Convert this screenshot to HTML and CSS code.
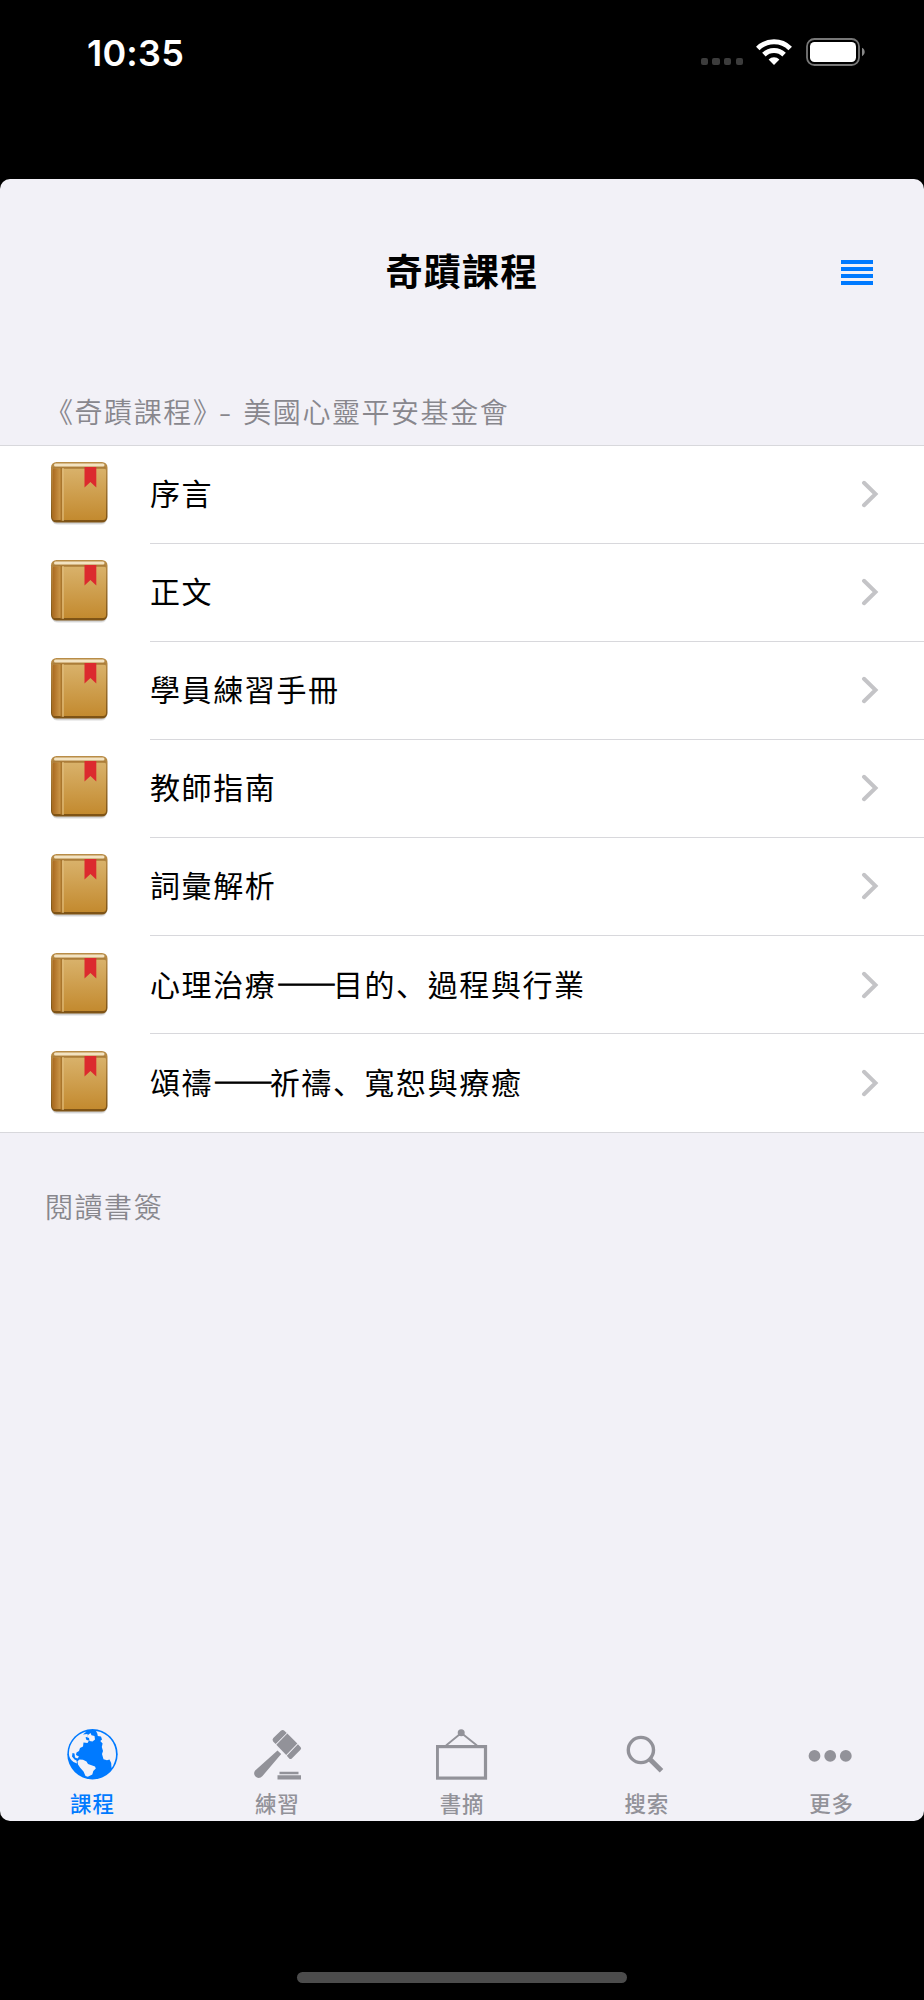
FILE: index.html
```
<!DOCTYPE html>
<html lang="zh-Hant">
<head>
  <meta charset="UTF-8" />
  <meta name="viewport" content="width=device-width, initial-scale=1.0"/>
  <title>奇蹟課程</title>
  <link rel="stylesheet" href="styles.css">
</head>
<body>
  <!-- Shared icons -->
  <svg class="defs" width="0" height="0">
    <defs>
      <linearGradient id="cover" x1="0" y1="0" x2="0" y2="1">
        <stop offset="0" stop-color="#d9b26b"/>
        <stop offset="1" stop-color="#c38a2f"/>
      </linearGradient>
      <linearGradient id="spine" x1="0" y1="0" x2="1" y2="0">
        <stop offset="0" stop-color="#a9691f"/>
        <stop offset="1" stop-color="#cf9c4e"/>
      </linearGradient>
      <linearGradient id="edge" x1="0" y1="0" x2="0" y2="1">
        <stop offset="0" stop-color="#b98d48"/>
        <stop offset="1" stop-color="#7d5214"/>
      </linearGradient>
      <symbol id="book" viewBox="0 0 60 66">
        <rect x="2" y="4" width="55" height="60" rx="6" fill="#000" opacity=".07"/>
        <rect x="1.5" y="3" width="55" height="60" rx="5" fill="#000" opacity=".1"/>
        <rect x="1" y="1" width="56.5" height="60.5" rx="5.5" fill="url(#edge)"/>
        <rect x="4" y="2.6" width="50.5" height="3" rx="1.5" fill="#f3e3c2"/>
        <rect x="2.5" y="7" width="53.5" height="52" rx="3" fill="url(#cover)"/>
        <rect x="3" y="6.3" width="52.5" height="1.4" fill="#a97a35"/>
        <rect x="2.5" y="7.5" width="9" height="51.5" rx="2" fill="url(#spine)"/>
        <rect x="10.6" y="7" width="1.2" height="53" fill="#a06c25"/>
        <rect x="12.4" y="7" width="1.2" height="53" fill="#e2be80"/>
        <path d="M34.5 6h11.8v20.500l-5.900-5.500-5.900 5.500z" fill="#dc2a2e"/>
      </symbol>
      <symbol id="chevron" viewBox="0 0 18 28">
        <path d="M3 2.8 14.5 14 3 25.2" fill="none" stroke="#c4c4c7" stroke-width="4" stroke-linecap="round"/>
      </symbol>
    </defs>
  </svg>

  <header class="status-bar">
    <span class="time">10:35</span>
    <div class="status-icons">
      <div class="signal"><i></i><i></i><i></i><i></i></div>
      <svg class="wifi" viewBox="0 0 36 28">
        <g fill="none" stroke="#fff" stroke-width="5">
          <path d="M1.8 10.4a23 23 0 0 1 32.4 0"/>
          <path d="M7.9 16.6a14.5 14.5 0 0 1 20.2 0"/>
        </g>
        <path d="M12.6 21.4a7.8 7.8 0 0 1 10.8 0L18 27z" fill="#fff"/>
      </svg>
      <svg class="battery" viewBox="0 0 60 28">
        <rect x="1" y="1" width="52" height="26" rx="7.5" fill="none" stroke="#777" stroke-width="1.8"/>
        <rect x="4" y="4" width="46" height="20" rx="4.5" fill="#fff"/>
        <path d="M56 9.8c3.6 1.8 3.6 6.6 0 8.4z" fill="#888"/>
      </svg>
    </div>
  </header>

  <main class="panel">
    <div class="nav-bar">
      <h1>奇蹟課程</h1>
      <div class="menu"><i></i><i></i><i></i><i></i></div>
    </div>

    <h2 class="section-title first">《奇蹟課程》<span class="dash">-</span>美國心靈平安基金會</h2>
    <ul class="list">
      <li><svg class="book"><use href="#book"/></svg><div class="row"><span>序言</span><svg class="chevron"><use href="#chevron"/></svg></div></li>
      <li><svg class="book"><use href="#book"/></svg><div class="row"><span>正文</span><svg class="chevron"><use href="#chevron"/></svg></div></li>
      <li><svg class="book"><use href="#book"/></svg><div class="row"><span>學員練習手冊</span><svg class="chevron"><use href="#chevron"/></svg></div></li>
      <li><svg class="book"><use href="#book"/></svg><div class="row"><span>教師指南</span><svg class="chevron"><use href="#chevron"/></svg></div></li>
      <li><svg class="book"><use href="#book"/></svg><div class="row"><span>詞彙解析</span><svg class="chevron"><use href="#chevron"/></svg></div></li>
      <li><svg class="book"><use href="#book"/></svg><div class="row"><span>心理治療<b>——</b>目的<em lang="zh-Hans">、</em>過程與行業</span><svg class="chevron"><use href="#chevron"/></svg></div></li>
      <li><svg class="book"><use href="#book"/></svg><div class="row"><span>頌禱<b>——</b>祈禱<em lang="zh-Hans">、</em>寬恕與療癒</span><svg class="chevron"><use href="#chevron"/></svg></div></li>
    </ul>
    <h2 class="section-title">閱讀書簽</h2>

    <nav class="tab-bar">
      <a class="tab active">
        <svg viewBox="0 0 52 52">
          <circle cx="26.5" cy="26.2" r="25.2" fill="#007aff"/>
          <g fill="#f2f1f7">
            <path d="M20.5 3.400 17 6.500l4.500-.5.5 2.500-2.500 1 1 2.500 2.500.5-1.500 2.500-4-.5-.5 4-3 1.500-1 3-2.500 1.500-.5 2.500 3 1.500-1.500 2-2.500-1-.5-4-2-.5-.5 3.500 2.500 3 2 1 .5 3-3.500-1.500C4.500 32 2.900 29 2.900 25.500 3.200 14.500 10.500 6 20.500 3.400z"/>
            <path d="M22 7 24.500 5l1 2.200 3 .8.5 3.500-2.500 2-3-.5-.5-3-2-.8z"/>
            <path d="M11.500 33.200 13.500 31.500l3.500.2 3.500 1.800 1.500 2.500 7 2.500.8 2-2.500 2.500-1 3.500-4.500 2.300-2.300-.8-2-4.500-3.500-4-2-3z"/>
            <path d="M30 3C42.500 5 50 15 50 26.200c0 3-.5 5.500-1.500 8L47 38l-1.500 2-.3-5-1.700-3.500-2.500.8-3.500-1-1.500-5.300 1-3-1.200-4 .8-3.500-2.300-2.500 1.700-1.500-1-3-3.200-.5-.5-2.500z"/>
          </g>
        </svg>
        <span>課程</span>
      </a>
      <a class="tab">
        <svg viewBox="0 0 52 52">
          <g fill="#929299">
            <path d="M26.500 22.500 30.200 26 11.500 48c-2 2.300-5 2.500-7 .6s-1.800-4.800.5-6.800z"/>
            <path d="M29.800 2.800q2-1.500 3.600 0l2.300 2.100L24.700 16 22.300 13.700q-1.600-1.700 0-3.600z"/>
            <path d="M36.300 5.600 46.300 15.500 35.200 27 25.300 16.700z"/>
            <path d="M46.900 16.200 49.500 18.900q1.300 1.300 0 2.800l-8.700 8.700q-1.300 1-2.600 0l-2.400-2.700z"/>
            <path d="M28.500 43.800h19v2.400h-19zM26.500 47.200h23.500v4.300h-23.500z"/>
          </g>
        </svg>
        <span>練習</span>
      </a>
      <a class="tab">
        <svg viewBox="0 0 52 52">
          <path d="M10 17.500 25.300 5 41 17.500" fill="none" stroke="#929299" stroke-width="1.8"/>
          <circle cx="25.2" cy="4.7" r="3.5" fill="#929299"/>
          <rect x="1.3" y="18.600" width="48.200" height="31.500" fill="none" stroke="#929299" stroke-width="3.200"/>
        </svg>
        <span>書摘</span>
      </a>
      <a class="tab">
        <svg viewBox="0 0 52 52">
          <circle cx="19.9" cy="22" r="12.600" fill="none" stroke="#929299" stroke-width="3.400"/>
          <path d="M28.900 31.200 40.500 42.700" stroke="#929299" stroke-width="5"/>
        </svg>
        <span>搜索</span>
      </a>
      <a class="tab">
        <svg viewBox="0 0 52 52">
          <g fill="#929299"><circle cx="8.500" cy="27.900" r="5.900"/><circle cx="24.200" cy="27.900" r="5.900"/><circle cx="39.800" cy="27.900" r="5.900"/></g>
        </svg>
        <span>更多</span>
      </a>
    </nav>
  </main>

  <footer class="home"><div class="home-indicator"></div></footer>
</body>
</html>
```
FILE: styles.css
```
* {
  box-sizing: border-box;
}

body {
  margin: 0;
  height: 2000px;
  display: flex;
  flex-direction: column;
  background: #000;
  font-family: "Noto Sans CJK TC", sans-serif;
  overflow: hidden;
}

.defs {
  position: absolute;
}

/* Status bar */
.status-bar {
  height: 178.5px;
  flex: none;
  display: flex;
  justify-content: space-between;
  align-items: flex-start;
  padding: 38px 58px 0 87px;
}

.time {
  color: #fff;
  font: 600 36px/30px Inter, sans-serif;
  letter-spacing: .2px;
}

.status-icons {
  display: flex;
}

.signal {
  display: flex;
  gap: 4.5px;
  padding-top: 20px;
}

.signal i {
  width: 7.2px;
  height: 7.2px;
  border-radius: 2px;
  background: #3c3c3c;
}

.wifi {
  width: 36px;
  height: 28px;
  margin-left: 13px;
}

.battery {
  width: 60px;
  height: 28px;
  margin-left: 14px;
}

/* Panel */
.panel {
  height: 1642.5px;
  flex: none;
  display: flex;
  flex-direction: column;
  background: #f2f1f7;
  border-radius: 10px;
  overflow: hidden;
}

.nav-bar {
  height: 188px;
  display: grid;
  grid-template-columns: 1fr auto 1fr;
  align-items: center;
}

h1 {
  grid-column: 2;
  margin: 0;
  padding-bottom: 6px;
  font-size: 37px;
  font-weight: 700;
  letter-spacing: 1.3px;
}

.menu {
  justify-self: end;
  display: flex;
  flex-direction: column;
  gap: 2.4px;
  margin-right: 51px;
}

.menu i {
  width: 32px;
  height: 4.5px;
  background: #007aff;
}

.section-title {
  margin: 0;
  padding: 52px 45px 0;
  font-size: 28px;
  line-height: 42px;
  font-weight: 350;
  letter-spacing: 1.55px;
  color: #88878d;
}

.section-title.first {
  height: 78px;
  padding-top: 23px;
}

.dash {
  display: inline-block;
  width: 21px;
  transform: scaleX(1.3);
}

.list {
  list-style: none;
  margin: 0;
  padding: 0 0 0 50px;
  background: #fff;
  border-top: 1px solid #d8d8dc;
  border-bottom: 1px solid #d8d8dc;
}

.list li {
  height: 98.1px;
  display: flex;
  align-items: center;
}

.book {
  width: 60px;
  height: 66px;
  margin-bottom: 1px;
}

.row {
  flex: 1;
  height: 100%;
  display: flex;
  align-items: center;
  justify-content: space-between;
  margin-left: 40px;
  padding-right: 45px;
  border-bottom: 1px solid #d8d8dc;
  font-size: 30px;
  letter-spacing: 1.6px;
}

.row span {
  padding-bottom: 4px;
}

.list li:last-child .row {
  border-bottom: 0;
}

.row b {
  font-weight: 400;
  letter-spacing: -3.5px;
  -webkit-text-stroke: 1px #000;
}

.row em {
  font-style: normal;
  font-family: "Noto Sans CJK SC", sans-serif;
}

.chevron {
  width: 18px;
  height: 28px;
}

/* Tab bar */
.tab-bar {
  margin-top: auto;
  height: 93.5px;
  flex: none;
  display: grid;
  grid-template-columns: repeat(5, 1fr);
}

.tab {
  display: flex;
  flex-direction: column;
  align-items: center;
  color: #929299;
  font-size: 21.5px;
  line-height: 30px;
  font-weight: 500;
  letter-spacing: .8px;
}

.tab svg {
  width: 52px;
  height: 52px;
  margin-bottom: 8.5px;
}

.tab.active {
  color: #007aff;
}

/* Home indicator */
.home {
  flex: 1;
  display: flex;
  justify-content: center;
  align-items: flex-end;
  padding-bottom: 17.5px;
}

.home-indicator {
  width: 330px;
  height: 10.5px;
  border-radius: 6px;
  background: #4c4c4c;
}
```
